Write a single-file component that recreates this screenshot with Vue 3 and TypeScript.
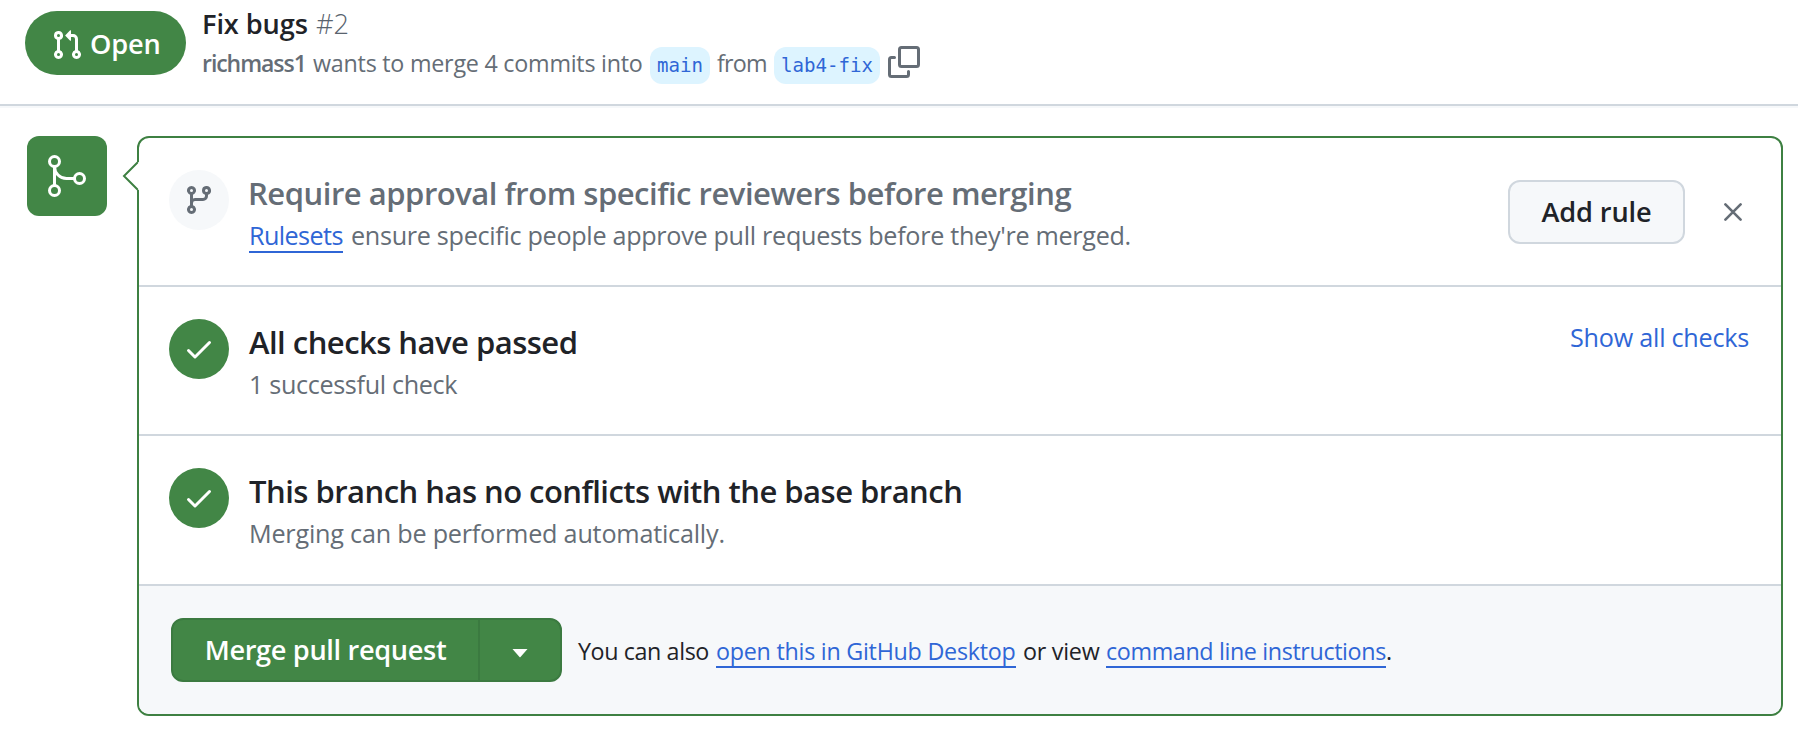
<script setup lang="ts">
interface StatusRow {
  title: string
  detail: string
  key: string
  action?: string
}

const rows: StatusRow[] = [
  { key: 'checks', title: 'All checks have passed', detail: '1 successful check', action: 'Show all checks' },
  { key: 'conflicts', title: 'This branch has no conflicts with the base branch', detail: 'Merging can be performed automatically.' },
]
</script>

<template>
  <main class="page">
    <header class="head">
      <span class="state">
        <svg width="32" height="32" viewBox="0 0 16 16" fill="currentColor" aria-hidden="true">
          <path d="M1.5 3.25a2.25 2.25 0 1 1 3 2.122v5.256a2.251 2.251 0 1 1-1.5 0V5.372A2.25 2.25 0 0 1 1.5 3.25Zm5.677-.177L9.573.677A.25.25 0 0 1 10 .854V2.5h1A2.5 2.5 0 0 1 13.5 5v5.628a2.251 2.251 0 1 1-1.5 0V5a1 1 0 0 0-1-1h-1v1.646a.25.25 0 0 1-.427.177L7.177 3.427a.25.25 0 0 1 0-.354ZM3.75 2.5a.75.75 0 1 0 0 1.5.75.75 0 0 0 0-1.5Zm0 9.5a.75.75 0 1 0 0 1.5.75.75 0 0 0 0-1.5Zm8.25.75a.75.75 0 1 0 1.5 0 .75.75 0 0 0-1.5 0Z" />
        </svg>
        <span class="state-text">Open</span>
      </span>
      <div class="head-text">
        <h1 class="pr-title"><span class="pr-name">Fix bugs</span><span class="pr-number">#2</span></h1>
        <div class="pr-meta">
          <strong class="author">richmass1</strong>
          <span class="wants">wants to merge 4 commits into</span>
          <code class="ref ref-base">main</code>
          <span class="from">from</span>
          <code class="ref ref-head">lab4-fix</code>
          <svg class="copy" width="32" height="32" viewBox="0 0 32 32" fill="none" stroke="currentColor" stroke-width="3" stroke-linecap="round" aria-hidden="true">
            <rect x="11.5" y="1.5" width="19" height="19" rx="2" />
            <path d="M6.5 11.5h-3a2 2 0 0 0-2 2v15a2 2 0 0 0 2 2h15a2 2 0 0 0 2-2v-3" />
          </svg>
        </div>
      </div>
    </header>

    <section class="merge">
      <div class="badge">
        <svg width="48" height="48" viewBox="0 0 24 24" fill="none" stroke="currentColor" stroke-width="1.5" aria-hidden="true">
          <circle cx="5.75" cy="4.75" r="2.5" />
          <circle cx="5.75" cy="19.25" r="2.5" />
          <circle cx="18.25" cy="13.25" r="2.5" />
          <path d="M5.75 7.25v9.5M5.75 7.25a6 6 0 0 0 6 6h4" />
        </svg>
      </div>
      <div class="panel">
        <svg class="caret" width="18" height="30" viewBox="0 0 18 30" aria-hidden="true">
          <path class="caret-fill" d="M18 0v30L15.5 28 2 15 15.5 2z" />
          <path class="caret-line" d="M15.5 1.5 2 15l13.500 13.500" />
        </svg>

        <div class="row">
          <span class="dot dot-muted">
            <svg width="32" height="32" viewBox="0 0 16 16" fill="currentColor" aria-hidden="true">
              <path d="M9.5 3.25a2.25 2.25 0 1 1 3 2.122V6A2.5 2.5 0 0 1 10 8.5H6a1 1 0 0 0-1 1v1.128a2.251 2.251 0 1 1-1.5 0V5.372a2.25 2.25 0 1 1 1.5 0v1.836A2.493 2.493 0 0 1 6 7h4a1 1 0 0 0 1-1v-.628A2.25 2.25 0 0 1 9.5 3.25Zm-6 0a.75.75 0 1 0 1.5 0 .75.75 0 0 0-1.5 0Zm8.25-.75a.75.75 0 1 0 0 1.5.75.75 0 0 0 0-1.5ZM4.25 12a.75.75 0 1 0 0 1.5.75.75 0 0 0 0-1.5Z" />
            </svg>
          </span>
          <div class="row-text">
            <h2 class="row-title rule-title">Require approval from specific reviewers before merging</h2>
            <p class="row-detail"><a class="link rulesets">Rulesets</a><span class="rule-detail">ensure specific people approve pull requests before they're merged.</span></p>
          </div>
          <button class="add" type="button">Add rule</button>
          <svg class="close" width="18" height="18" viewBox="0 0 18 18" fill="none" stroke="currentColor" stroke-width="2.6" stroke-linecap="round" aria-hidden="true">
            <path d="M1.400 1.400l15.200 15.200M16.600 1.400L1.400 16.600" />
          </svg>
        </div>

        <div v-for="row in rows" :key="row.key" class="row" :class="`row-${row.key}`">
          <span class="dot">
            <svg width="32" height="32" viewBox="0 0 16 16" fill="currentColor" aria-hidden="true">
              <path d="M13.78 4.22a.75.75 0 0 1 0 1.060l-7.250 7.250a.75.75 0 0 1-1.060 0L2.220 9.280a.751.751 0 0 1 .018-1.042.751.751 0 0 1 1.042-.018L6 10.940l6.720-6.720a.75.75 0 0 1 1.060 0Z" />
            </svg>
          </span>
          <div class="row-text">
            <h2 class="row-title">{{ row.title }}</h2>
            <p class="row-detail" :class="row.key">{{ row.detail }}</p>
          </div>
          <a v-if="row.action" class="show-all">{{ row.action }}</a>
        </div>

        <footer class="foot">
          <div class="split">
            <button class="merge-btn" type="button">Merge pull request</button>
            <button class="menu-btn" type="button" aria-label="Select merge method">
              <svg width="16" height="9" viewBox="0 0 16 9" fill="currentColor" aria-hidden="true"><path d="M.5 0h15L8.500 8q-.5.5-1 0z" /></svg>
            </button>
          </div>
          <p class="hint">
            <span class="also">You can also</span>
            <a class="link desktop">open this in GitHub Desktop</a>
            <span class="or">or view</span>
            <a class="link cli">command line instructions</a><span>.</span>
          </p>
        </footer>
      </div>
    </section>
  </main>
</template>

<style>
body {
  margin: 0;
  background: #fff;
}
</style>

<style scoped>
.page {
  width: 1798px;
  height: 734px;
  overflow: hidden;
  background: #fff;
  color: #1f2328;
  font-family: "Open Sans", "Noto Sans", sans-serif;
  white-space: nowrap;
}
h1, h2, p {
  margin: 0;
  font-weight: 400;
}
svg {
  display: block;
  flex: none;
}
button {
  font-family: inherit;
  margin: 0;
  padding: 0;
}

.head {
  display: flex;
  box-sizing: border-box;
  height: 106px;
  padding: 11px 0 0 25px;
  border-bottom: 2px solid #d0d7de;
  box-shadow: 0 2px 0 #f6f8fa;
}
.state {
  display: flex;
  box-sizing: border-box;
  width: 161px;
  height: 64px;
  padding: 18px 0 0 26px;
  border-radius: 32px;
  background: #428646;
  color: #fff;
}
.state-text {
  margin: -5px 0 0 7px;
  font-size: 27.200px;
  font-weight: 600;
  line-height: 40px;
  letter-spacing: -0.2px;
}
.head-text {
  margin: -7px 0 0 16px;
}
.pr-title {
  display: flex;
  height: 40px;
  font-size: 27.200px;
  line-height: 40px;
}
.pr-name {
  width: 114px;
  font-weight: 600;
  letter-spacing: -0.1px;
}
.pr-number {
  color: #59636e;
  font-weight: 300;
}
.pr-meta {
  display: flex;
  margin-top: 3px;
  height: 37px;
  color: #656d76;
  font-size: 23.300px;
  line-height: 33px;
}
.author {
  width: 111px;
  font-size: 23px;
  font-weight: 600;
  letter-spacing: -1.050px;
}
.wants {
  width: 337px;
  letter-spacing: -0.240px;
}
.ref {
  box-sizing: border-box;
  height: 37px;
  border-radius: 12px;
  background: #ddf4ff;
  color: #2f66d6;
  font: 19.100px/37px "DejaVu Sans Mono", monospace;
  text-align: center;
}
.ref-base {
  width: 60px;
}
.ref-head {
  width: 106px;
}
.from {
  width: 57px;
  margin-left: 7px;
  letter-spacing: -0.800px;
}
.copy {
  margin: -1px 0 0 8px;
}

.merge {
  display: flex;
  padding: 30px 15px 0 27px;
}
.badge {
  box-sizing: border-box;
  width: 80px;
  height: 80px;
  padding: 16px;
  border-radius: 12px;
  background: #428646;
  color: #fff;
}
.panel {
  position: relative;
  box-sizing: border-box;
  width: 1646px;
  height: 580px;
  margin-left: 30px;
  border: 2px solid #3e8042;
  border-radius: 12px;
}
.caret {
  position: absolute;
  left: -17px;
  top: 23px;
}
.caret-fill {
  fill: #fff;
}
.caret-line {
  fill: none;
  stroke: #3e8042;
  stroke-width: 2;
}

.row {
  display: flex;
  box-sizing: border-box;
  height: 149px;
  padding: 32px 32px 0 30px;
  border-bottom: 2px solid #d0d7de;
}
.row-conflicts {
  height: 150px;
}
.dot {
  display: flex;
  align-items: center;
  justify-content: center;
  width: 60px;
  height: 60px;
  border-radius: 50%;
  background: #428646;
  color: #fff;
}
.dot-muted {
  background: #f6f8fa;
  color: #656d76;
}
.row-text {
  flex: 1;
  margin: 3px 0 0 20px;
}
.row-title {
  font-size: 31px;
  font-weight: 600;
  line-height: 40px;
  letter-spacing: -0.520px;
}
.rule-title {
  margin-left: -1px;
  letter-spacing: -0.480px;
  color: #656d76;
}
.row-detail {
  display: flex;
  margin-top: 4px;
  color: #656d76;
  font-size: 25.200px;
  line-height: 37px;
}
.checks {
  letter-spacing: -0.350px;
}
.conflicts {
  letter-spacing: -0.220px;
}
.link {
  color: #2f66d6;
  border-bottom: 2px solid #2f66d6;
}
.rulesets {
  width: 94px;
  height: 34px;
  letter-spacing: -0.600px;
}
.rule-detail {
  margin-left: 8px;
  letter-spacing: -0.310px;
}
.add {
  box-sizing: border-box;
  width: 177px;
  height: 64px;
  margin: 10px 39px 0 0;
  border: 2px solid #d0d7de;
  border-radius: 12px;
  background: #f6f8fa;
  color: #1f2328;
  font-size: 27.200px;
  font-weight: 600;
  line-height: 60px;
  letter-spacing: -0.150px;
}
.close {
  margin: 33px 7px 0 0;
  color: #656d76;
}
.show-all {
  color: #2f66d6;
  font-size: 25.200px;
  line-height: 36px;
  letter-spacing: -0.250px;
}

.foot {
  display: flex;
  box-sizing: border-box;
  height: 128px;
  padding: 32px 0 0 32px;
  border-radius: 0 0 10px 10px;
  background: #f6f8fa;
}
.split {
  display: flex;
  box-sizing: border-box;
  width: 391px;
  height: 64px;
  border: 2px solid #3b7a40;
  border-radius: 12px;
  background: #428646;
}
.merge-btn,
.menu-btn {
  border: 0;
  background: none;
  color: #fff;
}
.merge-btn {
  width: 307px;
  border-right: 2px solid #3b7a40;
  font-size: 27.200px;
  font-weight: 600;
  line-height: 60px;
  letter-spacing: -0.350px;
}
.menu-btn {
  display: flex;
  flex: 1;
  padding: 29px 0 0 32px;
}
.hint {
  display: flex;
  margin: 16px 0 0 16px;
  font-size: 23.300px;
  line-height: 34px;
}
.hint .link {
  height: 32px;
}
.also {
  width: 138px;
  letter-spacing: -0.400px;
}
.desktop {
  width: 300px;
  letter-spacing: -0.250px;
}
.or {
  width: 83px;
  margin-left: 7px;
  letter-spacing: -0.250px;
}
.cli {
  width: 280px;
  letter-spacing: -0.370px;
}
</style>
